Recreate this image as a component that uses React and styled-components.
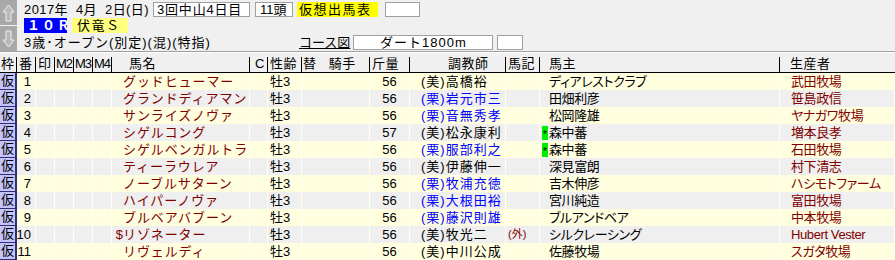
import React from "react";
import styled, { createGlobalStyle } from "styled-components";

const Global = createGlobalStyle`
  html, body { margin: 0; padding: 0; background: #f0f0f0; }
  body { font-family: "Liberation Sans", "Noto Sans CJK JP", sans-serif; font-size: 13px; color: #000; }
  * { box-sizing: border-box; }
`;

const Page = styled.div`
  width: 895px;
  height: 260px;
  overflow: hidden;
  display: flex;
  flex-direction: column;
  background: #f0f0f0;
`;

const Top = styled.div`
  height: 51px;
  display: flex;
`;

const ArrowCol = styled.div`
  width: 17px;
  display: flex;
  flex-direction: column;
  gap: 1px;
`;

const ArrowBtn = styled.div`
  flex: 1;
  background: #a8a8a8;
  display: flex;
  align-items: center;
  justify-content: center;
`;

const Info = styled.div`
  flex: 1;
  display: flex;
  flex-direction: column;
  padding-left: 7px;
  padding-top: 1px;
`;

const Line = styled.div`
  height: ${(p) => p.$h}px;
  display: flex;
  align-items: center;
`;

const Text = styled.span`
  line-height: 15px;
  white-space: pre;
  letter-spacing: ${(p) => p.$ls || 0}px;
  width: ${(p) => (p.$w ? p.$w + "px" : "auto")};
  flex-shrink: 0;
  text-decoration: ${(p) => (p.$u ? "underline" : "none")};
`;

const Box = styled.div`
  width: ${(p) => p.$w}px;
  height: 15px;
  flex-shrink: 0;
  margin-left: ${(p) => p.$ml || 0}px;
  background: #fff;
  border: 1px solid #a0a0a0;
  line-height: 13px;
  padding-left: ${(p) => p.$pl || 0}px;
  text-align: ${(p) => p.$align || "left"};
  letter-spacing: ${(p) => p.$ls || 0}px;
  white-space: pre;
`;

const Tag = styled.div`
  width: ${(p) => p.$w}px;
  height: 15px;
  flex-shrink: 0;
  margin-left: ${(p) => p.$ml || 0}px;
  background: ${(p) => p.$bg};
  color: ${(p) => p.$fg || "#000"};
  font-weight: ${(p) => (p.$bold ? 700 : 400)};
  line-height: 15px;
  padding-left: ${(p) => p.$pl || 0}px;
  letter-spacing: ${(p) => p.$ls || 0}px;
  white-space: pre;
`;

const Rule = styled.div`
  height: 2px;
  border-top: 1px solid #a0a0a0;
  border-bottom: 1px solid #ffffff;
`;

const cols = [
  { key: "waku", w: 17, h: "枠", hp: 1 },
  { key: "ban", w: 19, h: "番", hp: 2 },
  { key: "in", w: 19, h: "印", hp: 2 },
  { key: "m2", w: 19, h: "M2", hp: 1, ls: -1 },
  { key: "m3", w: 19, h: "M3", hp: 1, ls: -1 },
  { key: "m4", w: 19, h: "M4", hp: 1, ls: -1 },
  { key: "name", w: 138, h: "馬名", hp: 17 },
  { key: "c", w: 18, h: "C", hp: 5 },
  { key: "sex", w: 34, h: "性齢", hp: 2 },
  { key: "jockey", w: 68, h: "替   騎手", hp: 1 },
  { key: "weight", w: 40, h: "斤量", hp: 2 },
  { key: "trainer", w: 96, h: "調教師", hp: 38 },
  { key: "mark", w: 34, h: "馬記", hp: 2 },
  { key: "owner", w: 240, h: "馬主", hp: 9 },
  { key: "breeder", w: 115, h: "生産者", hp: 10 },
];

const gridCols = cols.map((c) => c.w + "px").join(" ");

const HeadRow = styled.div`
  display: grid;
  grid-template-columns: ${gridCols};
  height: 20px;
  border-bottom: 1px solid #000;
  background: #f0f0f0;
`;

const HeadCell = styled.div`
  position: relative;
  padding-left: ${(p) => p.$pl}px;
  line-height: 19px;
  padding-top: 1px;
  letter-spacing: ${(p) => p.$ls ?? 0.5}px;
  white-space: pre;
  overflow: hidden;
  &::after {
    content: "";
    position: absolute;
    right: 0;
    top: 4px;
    bottom: 0;
    width: 1px;
    background: ${(p) => (p.$last ? "transparent" : "#000")};
  }
`;

const Row = styled.div`
  display: grid;
  grid-template-columns: ${gridCols};
  height: 17px;
  background: ${(p) => (p.$odd ? "#ffffe0" : "#efefef")};
`;

const Cell = styled.div`
  border-right: 1px solid #fffff0;
  line-height: 17px;
  padding-left: ${(p) => p.$pl || 0}px;
  padding-right: ${(p) => p.$pr || 0}px;
  color: ${(p) => p.$color || "#000"};
  white-space: pre;
  overflow: hidden;
  display: flex;
  justify-content: ${(p) => (p.$align === "right" ? "flex-end" : p.$align === "center" ? "center" : "flex-start")};
  align-items: center;
`;

const WakuCell = styled.div`
  background: #c4c4fc;
  border-right: 2px solid #303070;
  border-bottom: 1px solid #303070;
  line-height: 16px;
  padding-left: 1px;
  white-space: pre;
`;

const Prefix = styled.span`
  display: inline-block;
  width: ${(p) => p.$w}px;
  text-align: right;
`;

const Star = styled.span`
  display: inline-block;
  width: 6px;
  height: 14px;
  background: #00ee00;
  color: #000;
  font-size: 11px;
  line-height: 16px;
  text-align: center;
  margin-right: 1px;
`;

const SmallRed = styled.span`
  color: #800000;
  font-size: 11px;
  margin-left: 1px;
`;

const Spaced = styled.span`
  letter-spacing: ${(p) => p.$ls ?? 0.5}px;
`;

const Prop = styled.span`
  font-feature-settings: "palt" 1;
  letter-spacing: -0.4px;
`;

const horses = [
  { n: 1, name: "グッドヒューマー", t: "(美)高橋裕", ow: "ディアレストクラブ", br: "武田牧場", w: 56 },
  { n: 2, name: "グランドディアマン", t: "(栗)岩元市三", blue: true, ow: "田畑利彦", br: "笹島政信", w: 56 },
  { n: 3, name: "サンライズノヴァ", t: "(栗)音無秀孝", blue: true, ow: "松岡隆雄", br: "ヤナガワ牧場", w: 56 },
  { n: 4, name: "シゲルコング", t: "(美)松永康利", ow: "森中蕃", star: true, br: "増本良孝", w: 57 },
  { n: 5, name: "シゲルベンガルトラ", t: "(栗)服部利之", blue: true, ow: "森中蕃", star: true, br: "石田牧場", w: 56 },
  { n: 6, name: "ティーラウレア", t: "(美)伊藤伸一", ow: "深見富朗", br: "村下清志", w: 56 },
  { n: 7, name: "ノーブルサターン", t: "(栗)牧浦充徳", blue: true, ow: "吉木伸彦", br: "ハシモトファーム", w: 56 },
  { n: 8, name: "ハイパーノヴァ", t: "(栗)大根田裕", blue: true, ow: "宮川純造", br: "富田牧場", w: 56 },
  { n: 9, name: "ブルベアバブーン", t: "(栗)藤沢則雄", blue: true, ow: "ブルアンドベア", br: "中本牧場", w: 56 },
  { n: 10, name: "リゾネーター", pre: "$", t: "(美)牧光二", mark: "(外)", ow: "シルクレーシング", br: "Hubert Vester", w: 56 },
  { n: 11, name: "リヴェルディ", t: "(美)中川公成", ow: "佐藤牧場", br: "スガタ牧場", w: 56 },
];

const UpArrow = () => (
  <svg width="13" height="18" viewBox="0 0 13 18">
    <polygon points="6.5,1 12,8 9,8 9,17 4,17 4,8 1,8" fill="#b8b8b8" stroke="#eeeeee" strokeWidth="1" />
  </svg>
);
const DownArrow = () => (
  <svg width="13" height="18" viewBox="0 0 13 18">
    <polygon points="6.5,17 12,10 9,10 9,1 4,1 4,10 1,10" fill="#b8b8b8" stroke="#eeeeee" strokeWidth="1" />
  </svg>
);

export default function App() {
  return (
    <Page>
      <Global />
      <Top>
        <ArrowCol>
          <ArrowBtn><UpArrow /></ArrowBtn>
          <ArrowBtn><DownArrow /></ArrowBtn>
        </ArrowCol>
        <Info>
          <Line $h={16}>
            <Text $w={129} $ls={0.4}>2017年  4月  2日(日)</Text>
            <Box $w={97} $pl={3} $ls={0.8}>3回中山4日目</Box>
            <Box $w={38} $ml={5} $pl={4}>11頭</Box>
            <Tag $w={81} $ml={4} $bg="#ffff00" $pl={2} $ls={1.5}>仮想出馬表</Tag>
            <Box $w={35} $ml={7} />
          </Line>
          <Line $h={17}>
            <Tag $w={43} $bg="#0000ff" $fg="#fff" $bold $pl={3} $ls={2}>１０Ｒ</Tag>
            <Tag $w={56} $ml={5} $bg="#ffff80" $pl={5} $ls={1.5}>伏竜Ｓ</Tag>
          </Line>
          <Line $h={16}>
            <Text $w={275} $ls={1}>3歳･オープン(別定)(混)(特指)</Text>
            <Text $u>コース図</Text>
            <Box $w={140} $ml={3} $align="center" $ls={1}>ダート1800m</Box>
            <Box $w={26} $ml={4} />
          </Line>
        </Info>
      </Top>
      <Rule />
      <HeadRow>
        {cols.map((c, i) => (
          <HeadCell key={c.key} $pl={c.hp} $ls={c.ls} $last={i === cols.length - 1}>{c.h}</HeadCell>
        ))}
      </HeadRow>
      {horses.map((h, i) => (
        <Row key={h.n} $odd={i % 2 === 0}>
          <WakuCell>仮</WakuCell>
          <Cell $align="right" $pr={4}>{h.n}</Cell>
          <Cell />
          <Cell />
          <Cell />
          <Cell />
          <Cell $pl={2} $color="#800000">
            <Prefix $w={9}>{h.pre || ""}</Prefix>
            <Spaced $ls={0.9}>{h.name}</Spaced>
          </Cell>
          <Cell />
          <Cell $pl={2}>牡3</Cell>
          <Cell />
          <Cell $align="center">{h.w}</Cell>
          <Cell $pl={11} $color={h.blue ? "#0000ff" : "#000"}><Spaced $ls={1}>{h.t}</Spaced></Cell>
          <Cell $pl={1}>{h.mark ? <SmallRed>{h.mark}</SmallRed> : null}</Cell>
          <Cell $pl={2}>
            {h.star ? <Star>*</Star> : <Prefix $w={7} />}
            <Prop>{h.ow}</Prop>
          </Cell>
          <Cell $pl={11} $color="#800000"><Prop>{h.br}</Prop></Cell>
        </Row>
      ))}
    </Page>
  );
}
